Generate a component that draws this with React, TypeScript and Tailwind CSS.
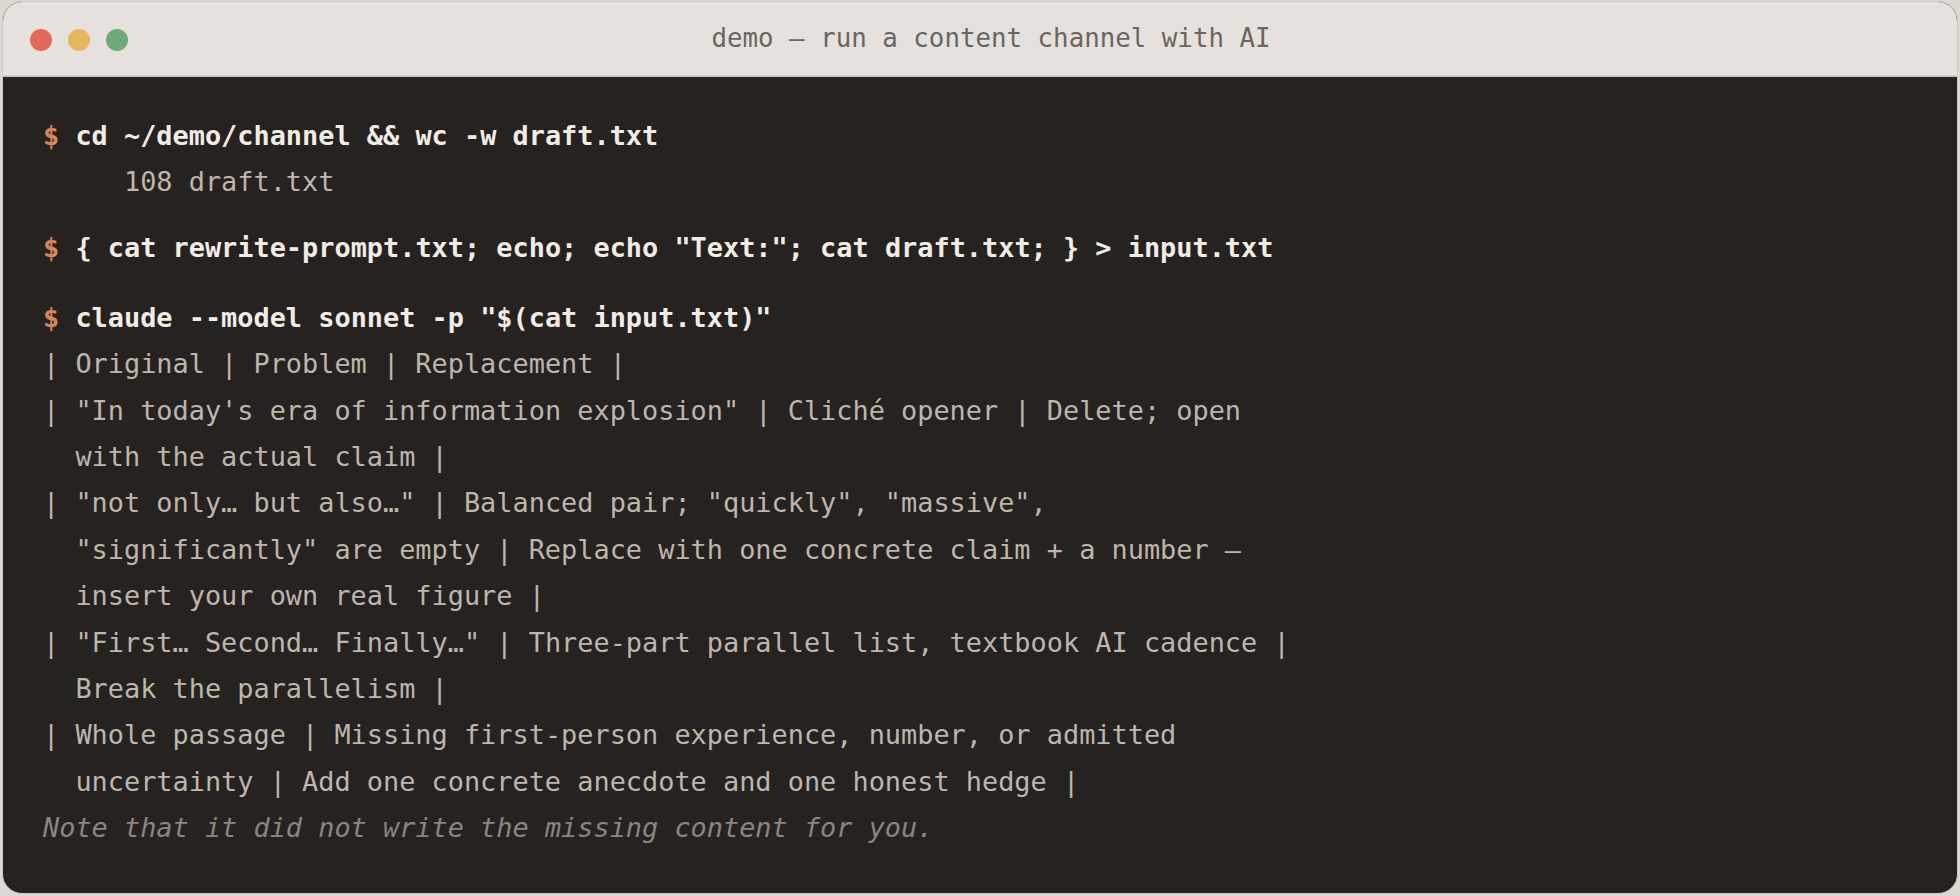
import React from "react";

const mono = "font-['DejaVu_Sans_Mono','Liberation_Mono',monospace]";

function Cmd({ children }: { children: React.ReactNode }) {
  return (
    <div className="whitespace-pre">
      <span className="text-[#d9865f] font-bold">$</span>
      <span className="text-[#f1ede6] font-bold"> {children}</span>
    </div>
  );
}

function Out({ lines }: { lines: string[] }) {
  return (
    <div className="text-[#bdb6ac]">
      {lines.map((l, i) => (
        <div key={i} className={i === 0 ? "whitespace-pre" : "whitespace-pre pl-[2ch]"}>
          {l}
        </div>
      ))}
    </div>
  );
}

export default function App() {
  return (
    <div className="w-full h-[896px] bg-[#dcd9d2] pt-[1px] px-[2px] pb-[2px]">
      <div className="h-full flex flex-col rounded-[20px] overflow-hidden border border-[#cfc9c0] bg-[#262220]">
        <div className="relative h-[75px] shrink-0 bg-[#e6e1dc] border-b-2 border-[#cfc9c0] flex items-center justify-center">
          <div className="absolute left-[27px] top-[27px] flex gap-[16px]">
            <div className="w-[22px] h-[22px] rounded-full bg-[#e5695a]" />
            <div className="w-[22px] h-[22px] rounded-full bg-[#e6b85e]" />
            <div className="w-[22px] h-[22px] rounded-full bg-[#6eaa78]" />
          </div>
          <div className={`${mono} ml-[22px] text-[25.8px] text-[#6b655f] whitespace-pre`}>
            demo — run a content channel with AI
          </div>
        </div>
        <div className={`${mono} flex-1 pt-[36px] pl-[40px] text-[26.9px] leading-[46.4px]`}>
          <div>
            <Cmd>cd ~/demo/channel &amp;&amp; wc -w draft.txt</Cmd>
            <div className="whitespace-pre text-[#bdb6ac]">{"     108 draft.txt"}</div>
          </div>
          <div className="mt-[19.6px]">
            <Cmd>{'{ cat rewrite-prompt.txt; echo; echo "Text:"; cat draft.txt; } > input.txt'}</Cmd>
          </div>
          <div className="mt-[23px]">
            <Cmd>{'claude --model sonnet -p "$(cat input.txt)"'}</Cmd>
            <Out lines={["| Original | Problem | Replacement |"]} />
            <Out
              lines={[
                '| "In today\'s era of information explosion" | Cliché opener | Delete; open',
                "with the actual claim |",
              ]}
            />
            <Out
              lines={[
                '| "not only… but also…" | Balanced pair; "quickly", "massive",',
                '"significantly" are empty | Replace with one concrete claim + a number —',
                "insert your own real figure |",
              ]}
            />
            <Out
              lines={[
                '| "First… Second… Finally…" | Three-part parallel list, textbook AI cadence |',
                "Break the parallelism |",
              ]}
            />
            <Out
              lines={[
                "| Whole passage | Missing first-person experience, number, or admitted",
                "uncertainty | Add one concrete anecdote and one honest hedge |",
              ]}
            />
            <div className="italic text-[#8c857d] whitespace-pre">
              Note that it did not write the missing content for you.
            </div>
          </div>
        </div>
      </div>
    </div>
  );
}
